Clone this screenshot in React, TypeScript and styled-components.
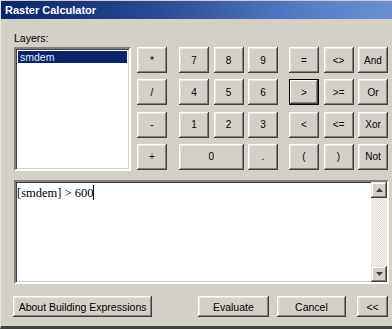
import React from 'react';
import styled, { createGlobalStyle, css } from 'styled-components';

const GlobalStyle = createGlobalStyle`
  html, body {
    margin: 0;
    padding: 0;
    background: #d4d0c8;
  }
  body {
    font-family: "Liberation Sans", Arial, sans-serif;
    font-size: 11px;
    color: #000;
  }
`;

const Window = styled.div`
  width: 392px;
  height: 329px;
  box-sizing: border-box;
  background: #d4d0c8;
  border-left: 1px solid #e8e6e0;
  border-bottom: 3px solid #404040;
  display: flex;
  flex-direction: column;
  overflow: hidden;
`;

const TitleBar = styled.div`
  height: 18px;
  margin-top: 1px;
  padding-left: 4px;
  display: flex;
  align-items: center;
  background: linear-gradient(90deg, #0a246a 0%, #2a4a94 40%, #5479c4 75%, #6b8fd2 100%);
  color: #fff;
  font-weight: bold;
  font-size: 11px;
`;

const Body = styled.div`
  flex: 1;
  padding: 13px 4px 0 12px;
  display: flex;
  flex-direction: column;
`;

const TopRow = styled.div`
  display: flex;
  align-items: flex-start;
`;

const LayersColumn = styled.div`
  width: 119px;
  display: flex;
  flex-direction: column;
  margin-left: 1px;
`;

const Label = styled.div`
  height: 15px;
  line-height: 12px;
  font-size: 10.5px;
`;

const sunken = css`
  box-sizing: border-box;
  background: #fff;
  border-style: solid;
  border-width: 2px;
  border-color: #808080 #fff #fff #808080;
  box-shadow: inset 1px 1px 0 #404040, inset -1px -1px 0 #d4d0c8;
`;

const LayerList = styled.div`
  ${sunken};
  height: 124px;
  padding: 2px;
`;

const LayerItem = styled.div<{ $selected?: boolean }>`
  height: 12px;
  line-height: 12px;
  padding-left: 2px;
  font-size: 10.5px;
  background: ${(p) => (p.$selected ? '#0a246a' : 'transparent')};
  color: ${(p) => (p.$selected ? '#e8e8ff' : '#000')};
`;

const Pad = styled.div`
  display: flex;
  margin-left: 6px;
  margin-top: 15px;
  gap: 11px;
`;

const PadGroup = styled.div<{ $cols: number; $shift?: number }>`
  display: grid;
  grid-template-columns: repeat(${(p) => p.$cols}, 30px);
  grid-auto-rows: 26px;
  column-gap: 4.5px;
  row-gap: 6.3px;
  margin-left: ${(p) => p.$shift ?? 0}px;
`;

const Button = styled.button<{ $span?: number; $default?: boolean; $w?: number; $ml?: number }>`
  box-sizing: border-box;
  margin: 0;
  margin-left: ${(p) => p.$ml ?? 0}px;
  padding: 0;
  border: none;
  background: #d4d0c8;
  font-family: "Liberation Sans", Arial, sans-serif;
  font-size: 10px;
  color: #000;
  display: flex;
  align-items: center;
  justify-content: center;
  grid-column: span ${(p) => p.$span ?? 1};
  ${(p) => (p.$w ? `width: ${p.$w}px; height: 21px; font-size: 10.5px;` : '')}
  box-shadow: ${(p) =>
    p.$default
      ? 'inset 0 0 0 1px #000, inset -2px -2px 0 #404040, inset 2px 2px 0 #fff, inset -3px -3px 0 #808080'
      : 'inset -1px -1px 0 #404040, inset 1px 1px 0 #fff, inset -2px -2px 0 #808080, inset 2px 2px 0 #e8e6e0'};
`;

const Expression = styled.div`
  ${sunken};
  margin-top: 9px;
  margin-left: 1px;
  width: 375px;
  height: 104px;
  display: flex;
`;

const ExprText = styled.div`
  flex: 1;
  padding: 3px 0 0 1px;
  font-family: "Liberation Serif", "Times New Roman", serif;
  font-size: 12.5px;
  line-height: 16px;
`;

const Caret = styled.span`
  display: inline-block;
  width: 1px;
  height: 15px;
  background: #000;
  vertical-align: -3px;
`;

const ScrollBar = styled.div`
  width: 16px;
  display: flex;
  flex-direction: column;
  justify-content: space-between;
  background-image: repeating-conic-gradient(#e4e1da 0 25%, #f4f2ee 0 50%);
  background-size: 2px 2px;
`;

const ScrollButton = styled.div`
  height: 16px;
  background: #d4d0c8;
  display: flex;
  align-items: center;
  justify-content: center;
  box-shadow: inset -1px -1px 0 #404040, inset 1px 1px 0 #e8e6e0, inset -2px -2px 0 #808080, inset 2px 2px 0 #fff;
`;

const Footer = styled.div`
  display: flex;
  margin-top: 12px;
`;

const Arrow = ({ up }: { up?: boolean }) => (
  <svg width="7" height="4" viewBox="0 0 7 4">
    <path d={up ? 'M3.5 0 L7 4 L0 4 Z' : 'M0 0 L7 0 L3.5 4 Z'} fill="#404040" />
  </svg>
);

const App: React.FC = () => {
  return (
    <>
      <GlobalStyle />
      <Window>
        <TitleBar>Raster Calculator</TitleBar>
        <Body>
          <TopRow>
            <LayersColumn>
              <Label>Layers:</Label>
              <LayerList>
                <LayerItem $selected>smdem</LayerItem>
              </LayerList>
            </LayersColumn>
            <Pad>
              <PadGroup $cols={1}>
                <Button>*</Button>
                <Button>/</Button>
                <Button>-</Button>
                <Button>+</Button>
              </PadGroup>
              <PadGroup $cols={3} $shift={1}>
                <Button>7</Button>
                <Button>8</Button>
                <Button>9</Button>
                <Button>4</Button>
                <Button>5</Button>
                <Button>6</Button>
                <Button>1</Button>
                <Button>2</Button>
                <Button>3</Button>
                <Button $span={2}>0</Button>
                <Button>.</Button>
              </PadGroup>
              <PadGroup $cols={3}>
                <Button>=</Button>
                <Button>&lt;&gt;</Button>
                <Button>And</Button>
                <Button $default>&gt;</Button>
                <Button>&gt;=</Button>
                <Button>Or</Button>
                <Button>&lt;</Button>
                <Button>&lt;=</Button>
                <Button>Xor</Button>
                <Button>(</Button>
                <Button>)</Button>
                <Button>Not</Button>
              </PadGroup>
            </Pad>
          </TopRow>
          <Expression>
            <ExprText>
              [smdem] &gt; 600<Caret />
            </ExprText>
            <ScrollBar>
              <ScrollButton>
                <Arrow up />
              </ScrollButton>
              <ScrollButton>
                <Arrow />
              </ScrollButton>
            </ScrollBar>
          </Expression>
          <Footer>
            <Button $w={140}>About Building Expressions</Button>
            <Button $w={71} $ml={46}>Evaluate</Button>
            <Button $w={70} $ml={8}>Cancel</Button>
            <Button $w={31} $ml={11}>&lt;&lt;</Button>
          </Footer>
        </Body>
      </Window>
    </>
  );
};

export default App;
